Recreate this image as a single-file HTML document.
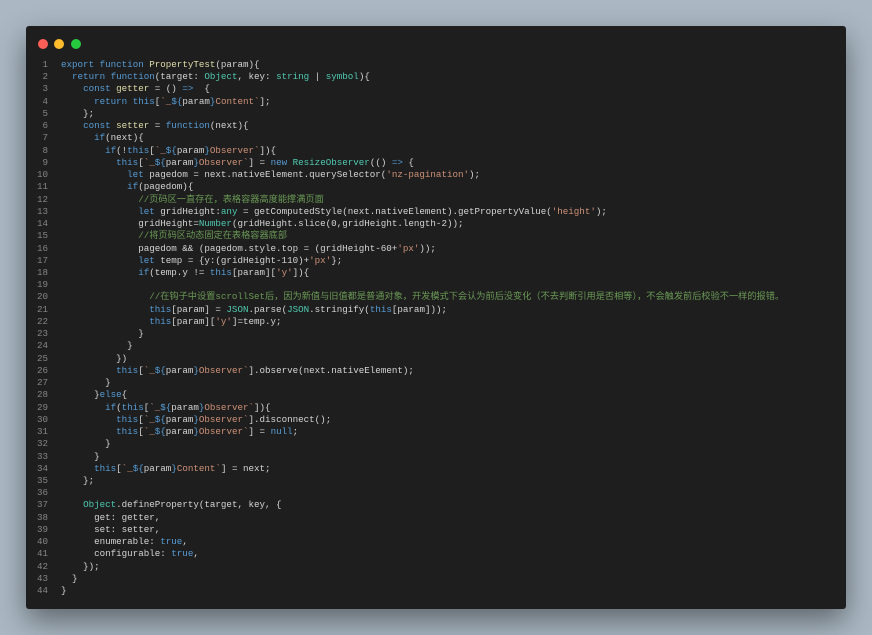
<!DOCTYPE html>
<html><head><meta charset="utf-8"><style>
html,body{margin:0;padding:0}
body{width:872px;height:635px;background:#abb8c3;position:relative;overflow:hidden}
.win{position:absolute;left:26px;top:26px;width:820px;height:583px;background:#1e1e1e;border-radius:3px;box-shadow:0 12px 30px rgba(0,0,0,.45)}
.dot{position:absolute;top:13px;width:10px;height:10px;border-radius:50%}
pre{position:absolute;left:0;top:33px;margin:0;font-family:"Liberation Mono","Noto Sans CJK SC",monospace;font-size:9.2px;line-height:12.24px;color:#d4d4d4;white-space:pre}
.n{display:inline-block;width:22px;text-align:right;color:#858585;margin-right:13px}
.k{color:#569cd6}.f{color:#dcdcaa}.t{color:#4ec9b0}.s{color:#ce9178}.c{color:#6a9955}.v{color:#9cdcfe}
</style></head><body>
<div class="win">
<div class="dot" style="left:12px;background:#ff5f56"></div>
<div class="dot" style="left:28px;background:#ffbd2e"></div>
<div class="dot" style="left:45px;background:#27c93f"></div>
<pre><span class="n">1</span><span class="k">export</span> <span class="k">function</span> <span class="f">PropertyTest</span>(param){
<span class="n">2</span>  <span class="k">return</span> <span class="k">function</span>(target: <span class="t">Object</span>, key: <span class="t">string</span> | <span class="t">symbol</span>){
<span class="n">3</span>    <span class="k">const</span> <span class="f">getter</span> = () <span class="k">=&gt;</span>  {
<span class="n">4</span>      <span class="k">return</span> <span class="k">this</span>[<span class="s">`_</span><span class="k">${</span>param<span class="k">}</span><span class="s">Content`</span>];
<span class="n">5</span>    };
<span class="n">6</span>    <span class="k">const</span> <span class="f">setter</span> = <span class="k">function</span>(next){
<span class="n">7</span>      <span class="k">if</span>(next){
<span class="n">8</span>        <span class="k">if</span>(!<span class="k">this</span>[<span class="s">`_</span><span class="k">${</span>param<span class="k">}</span><span class="s">Observer`</span>]){
<span class="n">9</span>          <span class="k">this</span>[<span class="s">`_</span><span class="k">${</span>param<span class="k">}</span><span class="s">Observer`</span>] = <span class="k">new</span> <span class="t">ResizeObserver</span>(() <span class="k">=&gt;</span> {
<span class="n">10</span>            <span class="k">let</span> pagedom = next.nativeElement.querySelector(<span class="s">'nz-pagination'</span>);
<span class="n">11</span>            <span class="k">if</span>(pagedom){
<span class="n">12</span>              <span class="c">//页码区一直存在，表格容器高度能撑满页面</span>
<span class="n">13</span>              <span class="k">let</span> gridHeight:<span class="t">any</span> = getComputedStyle(next.nativeElement).getPropertyValue(<span class="s">'height'</span>);
<span class="n">14</span>              gridHeight=<span class="t">Number</span>(gridHeight.slice(0,gridHeight.length-2));
<span class="n">15</span>              <span class="c">//将页码区动态固定在表格容器底部</span>
<span class="n">16</span>              pagedom &amp;&amp; (pagedom.style.top = (gridHeight-60+<span class="s">'px'</span>));
<span class="n">17</span>              <span class="k">let</span> temp = {y:(gridHeight-110)+<span class="s">'px'</span>};
<span class="n">18</span>              <span class="k">if</span>(temp.y != <span class="k">this</span>[param][<span class="s">'y'</span>]){
<span class="n">19</span>
<span class="n">20</span>                <span class="c">//在钩子中设置scrollSet后，因为新值与旧值都是普通对象，开发模式下会认为前后没变化（不去判断引用是否相等），不会触发前后校验不一样的报错。</span>
<span class="n">21</span>                <span class="k">this</span>[param] = <span class="t">JSON</span>.parse(<span class="t">JSON</span>.stringify(<span class="k">this</span>[param]));
<span class="n">22</span>                <span class="k">this</span>[param][<span class="s">'y'</span>]=temp.y;
<span class="n">23</span>              }
<span class="n">24</span>            }
<span class="n">25</span>          })
<span class="n">26</span>          <span class="k">this</span>[<span class="s">`_</span><span class="k">${</span>param<span class="k">}</span><span class="s">Observer`</span>].observe(next.nativeElement);
<span class="n">27</span>        }
<span class="n">28</span>      }<span class="k">else</span>{
<span class="n">29</span>        <span class="k">if</span>(<span class="k">this</span>[<span class="s">`_</span><span class="k">${</span>param<span class="k">}</span><span class="s">Observer`</span>]){
<span class="n">30</span>          <span class="k">this</span>[<span class="s">`_</span><span class="k">${</span>param<span class="k">}</span><span class="s">Observer`</span>].disconnect();
<span class="n">31</span>          <span class="k">this</span>[<span class="s">`_</span><span class="k">${</span>param<span class="k">}</span><span class="s">Observer`</span>] = <span class="k">null</span>;
<span class="n">32</span>        }
<span class="n">33</span>      }
<span class="n">34</span>      <span class="k">this</span>[<span class="s">`_</span><span class="k">${</span>param<span class="k">}</span><span class="s">Content`</span>] = next;
<span class="n">35</span>    };
<span class="n">36</span>
<span class="n">37</span>    <span class="t">Object</span>.defineProperty(target, key, {
<span class="n">38</span>      get: getter,
<span class="n">39</span>      set: setter,
<span class="n">40</span>      enumerable: <span class="k">true</span>,
<span class="n">41</span>      configurable: <span class="k">true</span>,
<span class="n">42</span>    });
<span class="n">43</span>  }
<span class="n">44</span>}</pre>
</div>
</body></html>
